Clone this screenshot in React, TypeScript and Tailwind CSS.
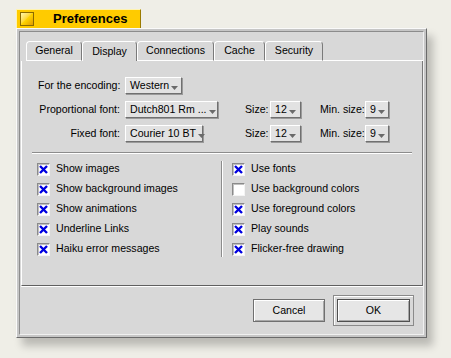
import React from "react";

const font = { fontFamily: '"Liberation Sans", Arial, sans-serif' };

function MenuField({ label, width }: { label: string; width: string }) {
  return (
    <div
      className={`${width} h-[17px] flex items-center justify-between pl-[4px] pr-[4px] bg-[#e2e2e2] border border-t-[#ffffff] border-l-[#ffffff] border-r-[#707070] border-b-[#707070] shadow-[1px_1px_0_#9a9a9a]`}
    >
      <span className="whitespace-nowrap">{label}</span>
      <svg width="7" height="4" viewBox="0 0 7 4" className="mt-[4px] ml-[2px] shrink-0">
        <path d="M0 0h7L3.5 4z" fill="#6a6a6a" />
      </svg>
    </div>
  );
}

function Check({ label, checked }: { label: string; checked: boolean }) {
  return (
    <div className="flex items-center h-[20px]">
      <div className="w-[13px] h-[13px] bg-white border border-t-[#8a8a8a] border-l-[#8a8a8a] border-r-[#f4f4f4] border-b-[#f4f4f4] shadow-[inset_1px_1px_0_#c0c0c0] flex items-center justify-center">
        {checked && (
          <svg width="9" height="9" viewBox="0 0 9 9">
            <path d="M1 1L8 8M8 1L1 8" stroke="#0000e0" strokeWidth="2.4" />
          </svg>
        )}
      </div>
      <span className="ml-[6px] whitespace-nowrap">{label}</span>
    </div>
  );
}

const tabs = [
  { name: "General", w: "w-[56px]" },
  { name: "Display", w: "w-[55px]", active: true },
  { name: "Connections", w: "w-[77px]" },
  { name: "Cache", w: "w-[51px]" },
  { name: "Security", w: "w-[58px]" },
];

export default function App() {
  return (
    <div
      className="w-[451px] h-[358px] bg-[#efeee7] pl-[16px] pt-[9px] text-[10.6px] text-black overflow-hidden"
      style={font}
    >
      {/* title tab */}
      <div className="w-[125px] h-[19px] bg-[#ffcb00] border-t border-l border-r border-t-[#fff3b0] border-l-[#fff3b0] border-r-[#9a7a00] flex items-center">
        <div className="ml-[3px] w-[14px] h-[14px] border border-[#8a6a00] bg-gradient-to-br from-[#fff8a8] via-[#ffd400] to-[#e09a00]" />
        <span className="ml-[19px] text-[13px] font-bold">Preferences</span>
      </div>

      {/* window */}
      <div className="w-[411px] h-[310px] border border-t-[#fafafa] border-l-[#fafafa] border-r-[#6a6a6a] border-b-[#6a6a6a] bg-[#c6c6c6] p-[2px] shadow-[6px_8px_8px_rgba(0,0,0,0.22)]">
        <div className="h-full border border-t-[#8c8c8c] border-l-[#8c8c8c] border-r-[#f0f0f0] border-b-[#f0f0f0] bg-[#d8d8d8] flex flex-col pt-[9px] pl-[1px]">
          {/* tab row */}
          <div className="flex h-[20px] pl-[5px]">
            {tabs.map((t) => (
              <div
                key={t.name}
                className={`${t.w} h-[20px] flex items-center justify-center rounded-tl-[4px] rounded-tr-[4px] border-t border-l border-r border-t-white border-l-white border-r-[#7a7a7a] bg-[#d8d8d8] ${
                  t.active ? "" : "border-b border-b-white"
                }`}
              >
                {t.name}
              </div>
            ))}
            <div className="flex-1 border-b border-b-white" />
          </div>

          {/* tab panel */}
          <div className="h-[225px] border-l border-r border-b border-l-white border-r-[#7a7a7a] border-b-[#606060] flex flex-col">
            <div className="grid grid-cols-[87px_120px_25px_50px_45px_auto] items-center gap-y-[7px] pl-[16px] pt-[16px]">
              <span className="text-right pr-[5px] whitespace-nowrap">For the encoding:</span>
              <div className="col-span-5">
                <MenuField label="Western" width="w-[57px]" />
              </div>

              <span className="text-right pr-[5px] whitespace-nowrap">Proportional font:</span>
              <div>
                <MenuField label="Dutch801 Rm ..." width="w-[93px]" />
              </div>
              <span>Size:</span>
              <MenuField label="12" width="w-[31px]" />
              <span className="whitespace-nowrap">Min. size:</span>
              <MenuField label="9" width="w-[24px]" />

              <span className="text-right pr-[5px] whitespace-nowrap">Fixed font:</span>
              <div>
                <MenuField label="Courier 10 BT" width="w-[78px]" />
              </div>
              <span>Size:</span>
              <MenuField label="12" width="w-[31px]" />
              <span className="whitespace-nowrap">Min. size:</span>
              <MenuField label="9" width="w-[24px]" />
            </div>

            <div className="mx-[10px] mt-[10px] h-[2px] border-t border-t-[#8c8c8c] border-b border-b-white" />

            <div className="flex pt-[5px]">
              <div className="w-[199px] pl-[15px] flex flex-col">
                <Check label="Show images" checked />
                <Check label="Show background images" checked />
                <Check label="Show animations" checked />
                <Check label="Underline Links" checked />
                <Check label="Haiku error messages" checked />
              </div>
              <div className="w-[2px] my-[2px] border-l border-l-[#8c8c8c] border-r border-r-white" />
              <div className="pl-[9px] flex flex-col">
                <Check label="Use fonts" checked />
                <Check label="Use background colors" checked={false} />
                <Check label="Use foreground colors" checked />
                <Check label="Play sounds" checked />
                <Check label="Flicker-free drawing" checked />
              </div>
            </div>
          </div>

          {/* buttons */}
          <div className="flex justify-end items-start pt-[8px] pr-[9px] gap-[8px] border-t border-t-white">
            <button className="mt-[4px] w-[72px] h-[23px] bg-[#e6e6e6] border border-[#707070] shadow-[inset_1px_1px_0_#ffffff,inset_-1px_-1px_0_#a8a8a8]">
              Cancel
            </button>
            <div className="w-[81px] h-[31px] p-[3px] border border-[#8a8a8a] shadow-[inset_1px_1px_0_#ffffff]">
              <button className="w-full h-full bg-[#e6e6e6] border border-[#505050] shadow-[inset_1px_1px_0_#ffffff,inset_-1px_-1px_0_#a8a8a8]">
                OK
              </button>
            </div>
          </div>
        </div>
      </div>
    </div>
  );
}
